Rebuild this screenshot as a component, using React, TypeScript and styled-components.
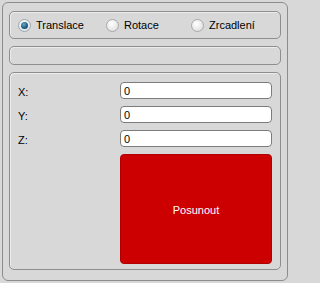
import React from "react";
import styled, { createGlobalStyle } from "styled-components";

const Global = createGlobalStyle`
  html, body { margin: 0; padding: 0; background: #d8d8d8; }
  body { font-family: "Liberation Sans", Tahoma, Arial, sans-serif; font-size: 11px; color: #000; }
`;

const Frame = styled.div`
  box-sizing: border-box;
  margin: 2px 0 0 2px;
  width: 286px;
  height: 279px;
  border: 1px solid #8c8c8c;
  border-radius: 6px;
  padding: 8px 6px 10px 6px;
  display: flex;
  flex-direction: column;
  gap: 7px;
  background: #d8d8d8;
`;

const Group = styled.div<{ $h: number }>`
  box-sizing: border-box;
  height: ${(p) => p.$h}px;
  border: 1px solid #8e8e8e;
  border-radius: 5px;
  box-shadow: inset 1px 1px 0 #ececec;
`;

const RadioRow = styled(Group)`
  display: flex;
  align-items: center;
  padding-left: 8px;
`;

const RadioItem = styled.label<{ $w: number }>`
  display: flex;
  align-items: center;
  gap: 5px;
  width: ${(p) => p.$w}px;
`;

const Circle = styled.span<{ $on?: boolean }>`
  box-sizing: border-box;
  width: 13px;
  height: 13px;
  border-radius: 50%;
  border: 1px solid ${(p) => (p.$on ? "#9aa8b4" : "#a9a9a9")};
  background: radial-gradient(circle at 40% 35%, #ffffff 0%, #e8e8e8 60%, #cfcfcf 100%);
  display: flex;
  align-items: center;
  justify-content: center;
  &::after {
    content: "";
    display: ${(p) => (p.$on ? "block" : "none")};
    width: 7px;
    height: 7px;
    border-radius: 50%;
    background: radial-gradient(circle at 40% 35%, #6aa6c8 0%, #1f5e86 55%, #123f5e 100%);
  }
`;

const Form = styled(Group)`
  display: grid;
  grid-template-columns: 102px 152px;
  grid-template-rows: 17px 17px 17px 110px;
  row-gap: 7px;
  padding: 9px 0 0 8px;
  align-items: center;
`;

const Label = styled.span`
  padding-top: 2px;
`;

const Input = styled.input`
  box-sizing: border-box;
  width: 152px;
  height: 17px;
  border: 1px solid #7c7c7c;
  border-radius: 4px;
  background: #fff;
  padding: 0 0 0 3px;
  font-family: "Liberation Sans", Tahoma, Arial, sans-serif;
  font-size: 11px;
  color: #000;
  outline: none;
`;

const Button = styled.button`
  grid-column: 2;
  align-self: stretch;
  box-sizing: border-box;
  width: 152px;
  border: 1px solid #b00000;
  border-radius: 4px;
  background: #cc0000;
  color: #fff;
  font-family: "Liberation Sans", Tahoma, Arial, sans-serif;
  font-size: 11px;
  padding: 1px 0 0;
`;

export default function App() {
  return (
    <>
      <Global />
      <Frame>
        <RadioRow $h={28}>
          <RadioItem $w={88}>
            <Circle $on />
            Translace
          </RadioItem>
          <RadioItem $w={85}>
            <Circle />
            Rotace
          </RadioItem>
          <RadioItem $w={80}>
            <Circle />
            Zrcadlení
          </RadioItem>
        </RadioRow>
        <Group $h={19} />
        <Form $h={198}>
          <Label>X:</Label>
          <Input defaultValue="0" />
          <Label>Y:</Label>
          <Input defaultValue="0" />
          <Label>Z:</Label>
          <Input defaultValue="0" />
          <Button>Posunout</Button>
        </Form>
      </Frame>
    </>
  );
}
